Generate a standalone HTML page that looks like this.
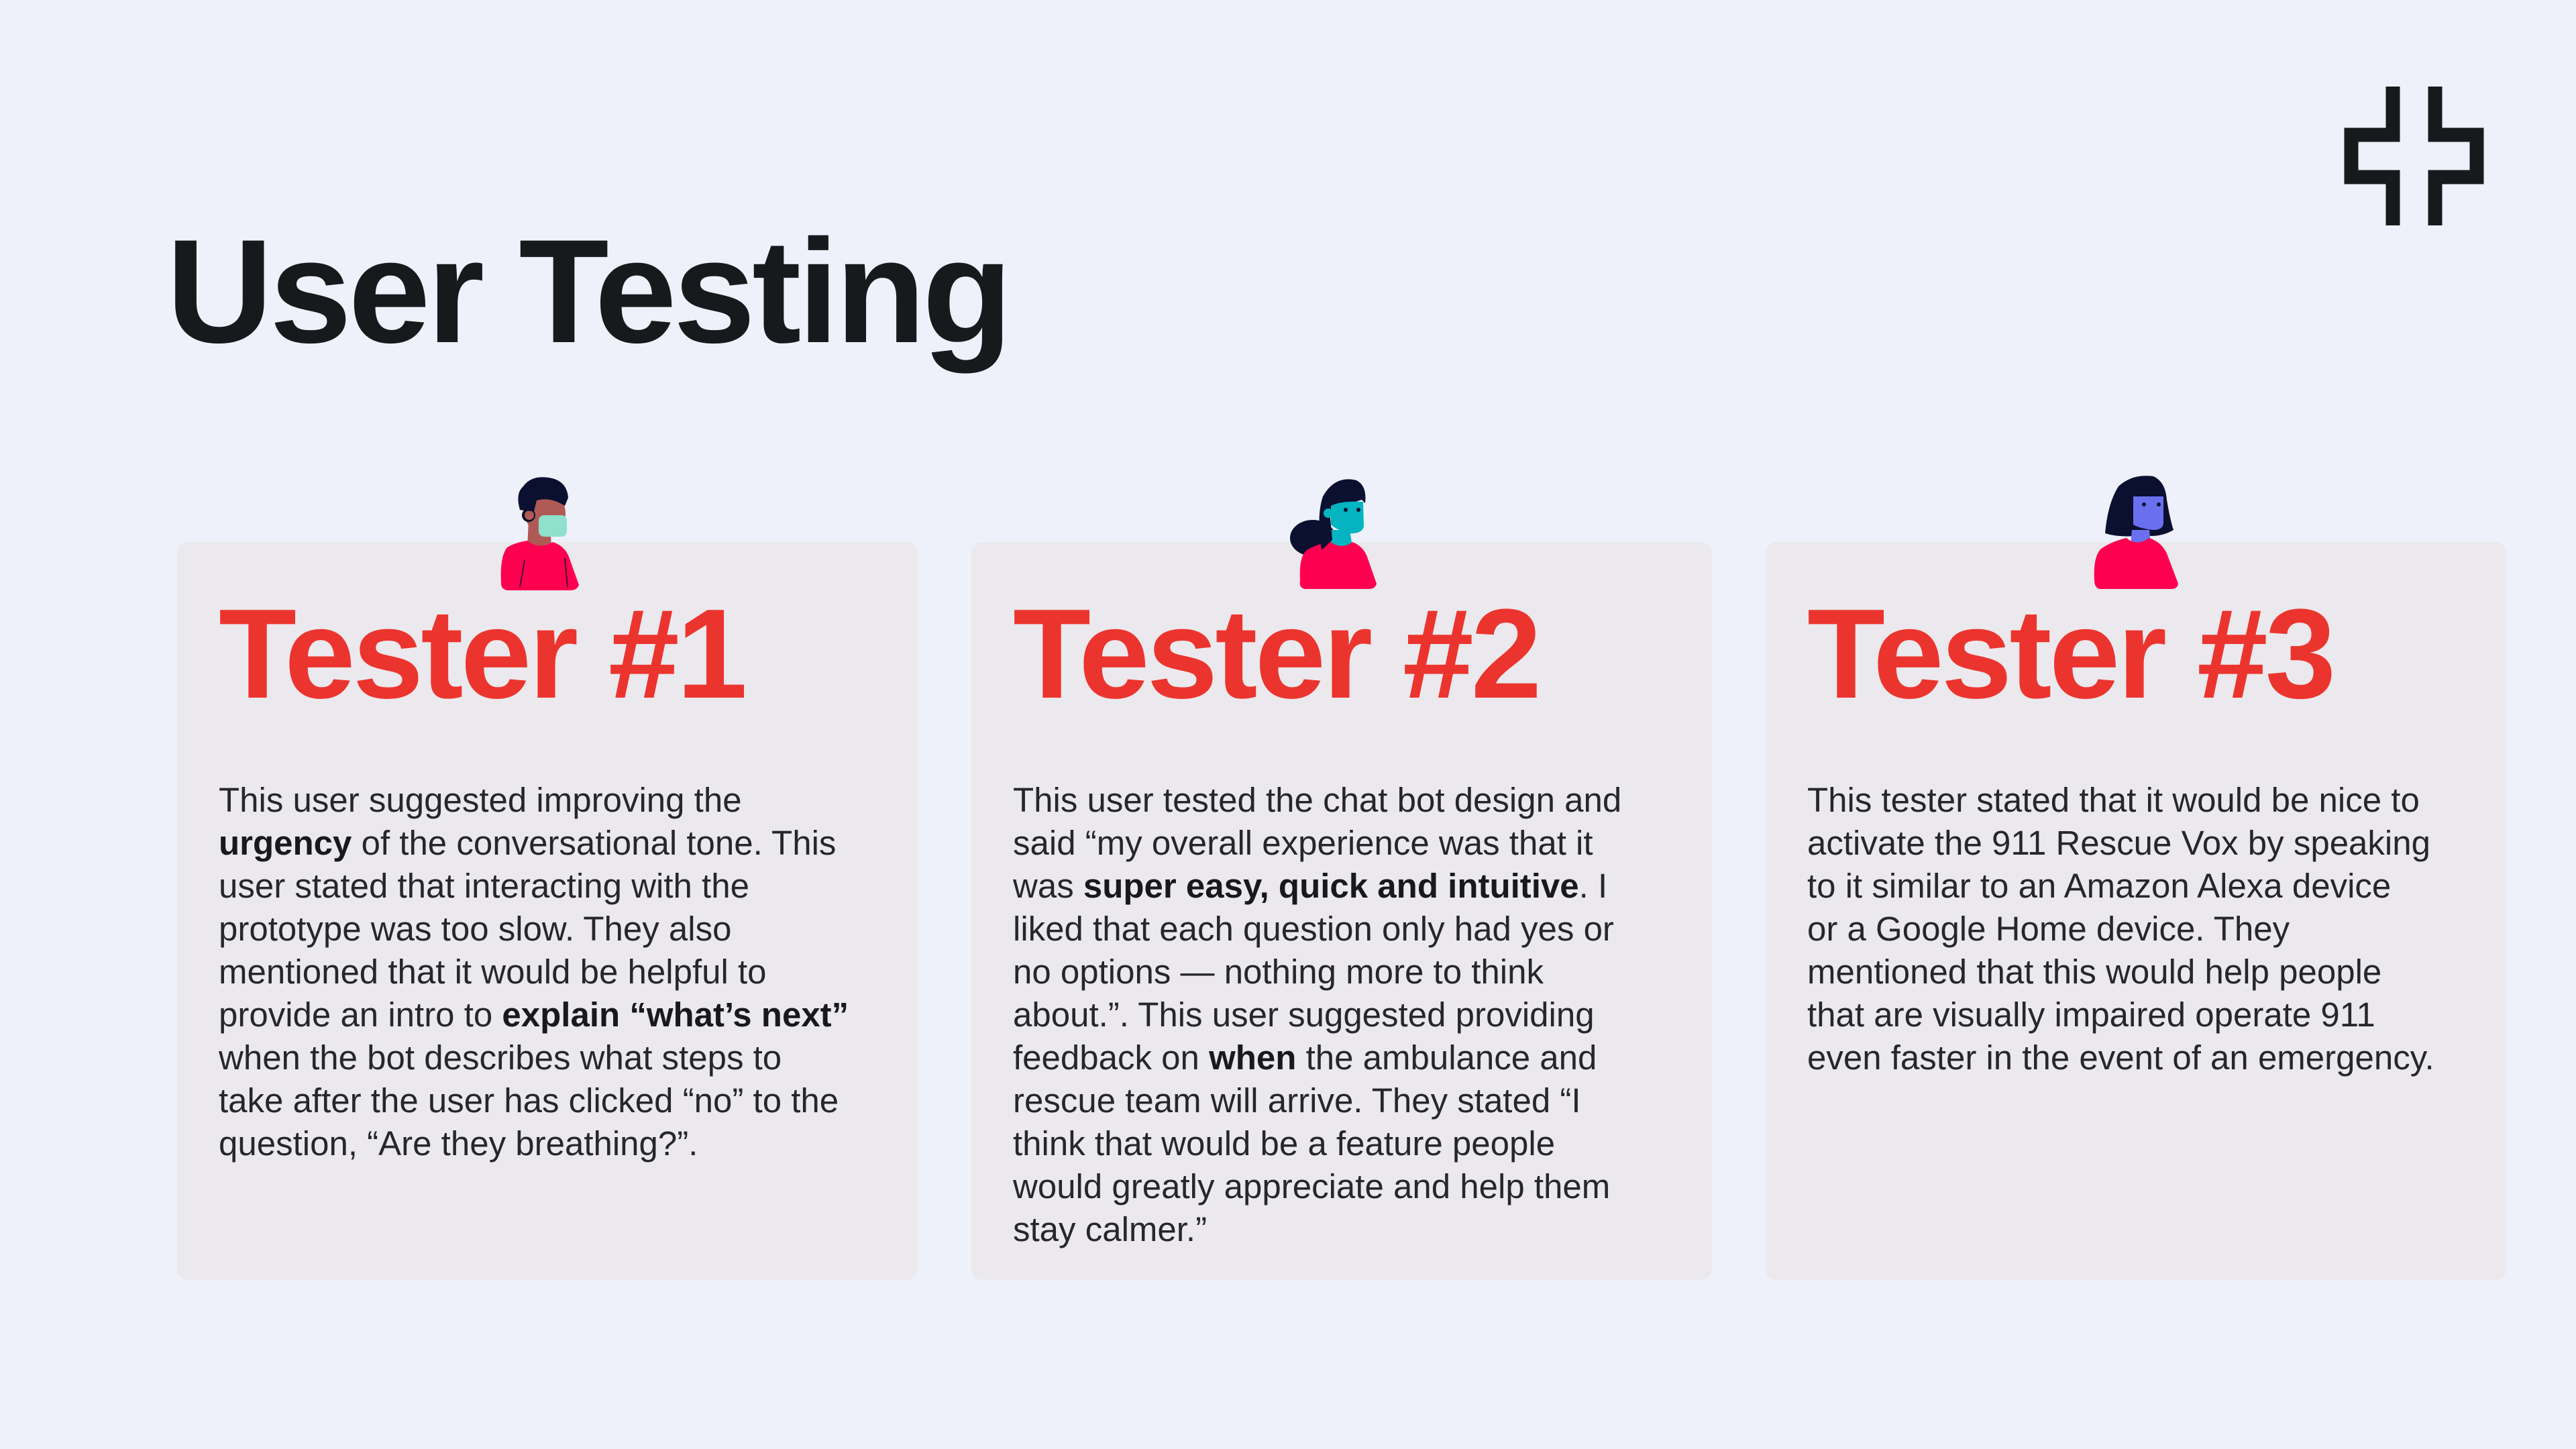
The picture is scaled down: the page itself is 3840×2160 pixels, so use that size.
<!DOCTYPE html>
<html><head><meta charset="utf-8"><style>
*{margin:0;padding:0;box-sizing:border-box}
body{width:3840px;height:2160px;background:#eef1f9;position:relative;overflow:hidden;font-family:"Liberation Sans",sans-serif;color:#18191c}
.title{position:absolute;left:248px;top:324px;font-size:220px;line-height:1;font-weight:700;letter-spacing:-5px;color:#18191c}
.card{position:absolute;top:808px;height:1100px;width:1104px;background:#ebe9ed;border-radius:16px}
.h{position:absolute;top:880px;font-size:190px;line-height:1;font-weight:700;letter-spacing:-4px;color:#ec342e}
.t{position:absolute;top:1161px;font-size:51px;line-height:64px;white-space:nowrap;color:#26272a}
.t b{font-weight:700;color:#18191c}
svg{position:absolute}
</style></head><body>
<div class="title">User Testing</div>
<svg style="left:0;top:0" width="3840" height="400"><path d="M3567,129 V201 H3505 V264 H3567 V336 M3630,129 V201 H3692 V264 H3630 V336" fill="none" stroke="#18191c" stroke-width="21"/></svg>

<div class="card" style="left:264px"></div>
<div class="card" style="left:1448px"></div>
<div class="card" style="left:2632px"></div>

<!-- avatar 1 -->
<svg style="left:700px;top:680px" width="200" height="220" viewBox="0 0 200 220">
<path d="M88,95 L120,95 L122,137 L86,137Z" fill="#b05a55"/>
<path d="M47,188 Q45,150 56,136 Q70,128 86,126 Q104,140 124,128 Q142,134 148,150 L163,192 Q160,200 150,200 L56,200 Q46,198 47,188Z" fill="#ff0050"/>
<ellipse cx="113" cy="85" rx="30" ry="33" fill="#b05a55"/>
<circle cx="88" cy="88" r="10" fill="#0b1030"/><circle cx="89" cy="88" r="7" fill="#b05a55"/>
<path d="M75,80 Q68,55 80,45 Q92,28 118,32 Q145,36 147,62 L142,74 Q120,60 100,66 L96,82 Q85,82 75,80Z" fill="#0b1030"/>
<rect x="103" y="88" width="42" height="32" rx="8" fill="#8fe0cc"/>
<path d="M82,155 L75,195 M142,152 L146,195" stroke="#0b1030" stroke-width="1.5"/>
</svg>

<!-- avatar 2 -->
<svg style="left:1900px;top:690px" width="180" height="200" viewBox="0 0 180 200">
<ellipse cx="57" cy="112" rx="34" ry="27" fill="#0b1030"/>
<path d="M80,100 L112,100 L116,125 L84,125Z" fill="#04b4c0"/>
<path d="M38,175 Q36,140 48,130 Q65,120 84,118 Q100,130 116,118 Q132,124 138,140 L152,180 Q150,188 140,188 L45,188 Q36,186 38,175Z" fill="#ff0050"/>
<path d="M70,130 Q62,80 72,50 Q90,18 122,26 Q138,34 135,60 L130,55 L82,70 L86,115Z" fill="#0b1030"/>
<path d="M84,64 Q100,56 132,58 L133,95 Q130,106 112,105 Q92,100 84,92Z" fill="#04b4c0"/>
<circle cx="80" cy="75" r="7" fill="#04b4c0"/>
<circle cx="106" cy="70" r="3" fill="#0b1030"/><circle cx="125" cy="70" r="3" fill="#0b1030"/>
</svg>

<!-- avatar 3 -->
<svg style="left:3100px;top:690px" width="180" height="200" viewBox="0 0 180 200">
<path d="M38,105 Q42,60 58,35 Q78,16 110,20 Q128,28 130,55 Q135,85 140,100 Q120,112 92,108 Q60,112 38,105Z" fill="#0b1030"/>
<path d="M78,100 L104,100 L106,122 L76,122Z" fill="#6a6ff0"/>
<path d="M22,175 Q20,140 32,128 Q50,116 70,112 Q85,125 104,112 Q122,118 130,135 L147,180 Q146,188 136,188 L30,188 Q22,186 22,175Z" fill="#ff0050"/>
<path d="M80,50 L125,50 L125,90 Q124,100 110,100 Q90,98 80,92Z" fill="#6a6ff0"/>
<circle cx="96" cy="62" r="3" fill="#0b1030"/><circle cx="118" cy="62" r="3" fill="#0b1030"/>
</svg>

<div class="h" style="left:326px">Tester #1</div>
<div class="h" style="left:1510px">Tester #2</div>
<div class="h" style="left:2694px">Tester #3</div>

<div class="t" style="left:326px">This user suggested improving the<br><b>urgency</b> of the conversational tone. This<br>user stated that interacting with the<br>prototype was too slow. They also<br>mentioned that it would be helpful to<br>provide an intro to <b>explain “what’s next”</b><br>when the bot describes what steps to<br>take after the user has clicked “no” to the<br>question, “Are they breathing?”.</div>

<div class="t" style="left:1510px">This user tested the chat bot design and<br>said “my overall experience was that it<br>was <b>super easy, quick and intuitive</b>. I<br>liked that each question only had yes or<br>no options — nothing more to think<br>about.”. This user suggested providing<br>feedback on <b>when</b> the ambulance and<br>rescue team will arrive. They stated “I<br>think that would be a feature people<br>would greatly appreciate and help them<br>stay calmer.”</div>

<div class="t" style="left:2694px">This tester stated that it would be nice to<br>activate the 911 Rescue Vox by speaking<br>to it similar to an Amazon Alexa device<br>or a Google Home device. They<br>mentioned that this would help people<br>that are visually impaired operate 911<br>even faster in the event of an emergency.</div>
</body></html>
